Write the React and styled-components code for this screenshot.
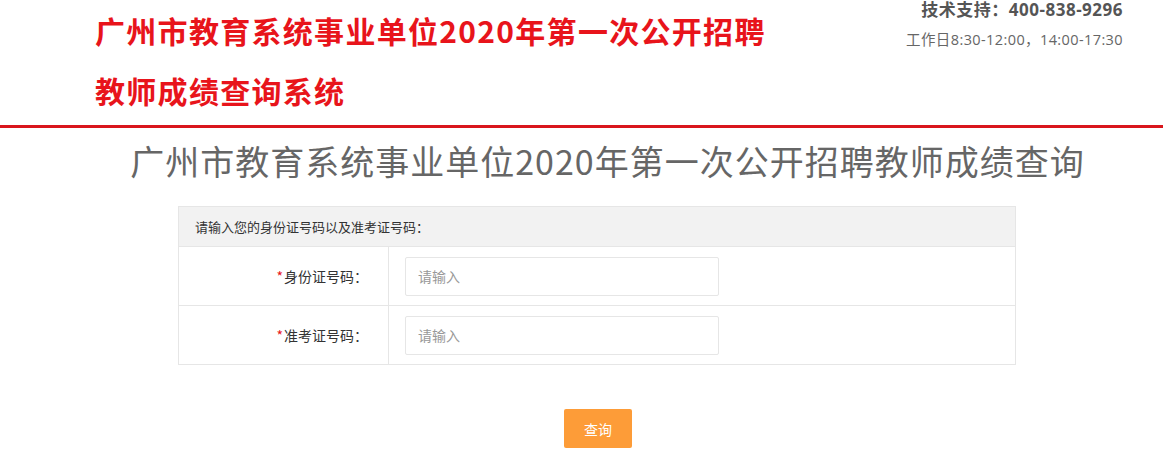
import React from 'react';
import styled, { createGlobalStyle } from 'styled-components';

const Global = createGlobalStyle`
    body {
        margin: 0;
        background: #fff;
        font-family: "Noto Sans CJK SC", "Noto Sans", sans-serif;
        color: #333;
    }
`;

const Header = styled.div`
    height: 125px;
    border-bottom: 3px solid #d9161c;
    display: flex;
    justify-content: space-between;
`;

const Brand = styled.div`
    padding-left: 95px;
`;

const BrandLine = styled.div`
    height: 60px;
    line-height: 60px;
    font-size: 30px;
    font-weight: 700;
    color: #e8141b;
    letter-spacing: 1.3px;
    white-space: nowrap;
`;

const Support = styled.div`
    padding-right: 40px;
    text-align: right;
`;

const Phone = styled.div`
    font-size: 17px;
    font-weight: 700;
    color: #555;
    line-height: 20px;
    letter-spacing: 0.5px;
    font-family: "Open Sans", "Noto Sans CJK SC", sans-serif;
`;

const Hours = styled.div`
    font-size: 14.5px;
    color: #666;
    line-height: 20px;
    margin-top: 10px;
    letter-spacing: 0.4px;
    font-family: "Open Sans", "Noto Sans CJK SC", sans-serif;
`;

const Title = styled.h1`
    margin: 3px 0 0 52px;
    text-align: center;
    font-size: 34px;
    font-weight: 400;
    line-height: 60px;
    color: #666;
    letter-spacing: 1px;
`;

const Card = styled.div`
    width: 836px;
    margin: 15px 0 0 178px;
    border: 1px solid #e6e6e6;
`;

const CardHead = styled.div`
    height: 39px;
    line-height: 39px;
    background: #f2f2f2;
    padding-left: 16px;
    font-size: 13px;
    color: #333;
`;

const Row = styled.div`
    display: flex;
    height: 58px;
    border-top: 1px solid #e6e6e6;
`;

const Label = styled.div`
    width: 189px;
    padding-right: 20px;
    border-right: 1px solid #e6e6e6;
    display: flex;
    align-items: center;
    justify-content: flex-end;
    font-size: 14px;
    color: #333;
`;

const Star = styled.span`
    color: #e8141b;
    margin-right: 1px;
`;

const Cell = styled.div`
    display: flex;
    align-items: center;
    padding-left: 16px;
`;

const Input = styled.input`
    box-sizing: border-box;
    width: 314px;
    height: 39px;
    border: 1px solid #e6e6e6;
    border-radius: 2px;
    padding: 0 12px;
    font-size: 14px;
    font-family: inherit;
    color: #333;
    outline: none;
    &::placeholder {
        color: #999;
    }
`;

const Actions = styled.div`
    padding: 44px 0 0 564px;
`;

const Button = styled.button`
    width: 68px;
    height: 39px;
    border: none;
    border-radius: 2px;
    background: #fd9c38;
    color: #fff;
    font-size: 14px;
    font-family: inherit;
    cursor: pointer;
`;

function App() {
    return (
        <React.Fragment>
            <Global />
            <Header>
                <Brand>
                    <BrandLine>广州市教育系统事业单位2020年第一次公开招聘</BrandLine>
                    <BrandLine>教师成绩查询系统</BrandLine>
                </Brand>
                <Support>
                    <Phone>技术支持：400-838-9296</Phone>
                    <Hours>工作日8:30-12:00，14:00-17:30</Hours>
                </Support>
            </Header>
            <Title>广州市教育系统事业单位2020年第一次公开招聘教师成绩查询</Title>
            <Card>
                <CardHead>请输入您的身份证号码以及准考证号码：</CardHead>
                <Row>
                    <Label><Star>*</Star>身份证号码：</Label>
                    <Cell><Input placeholder="请输入" /></Cell>
                </Row>
                <Row>
                    <Label><Star>*</Star>准考证号码：</Label>
                    <Cell><Input placeholder="请输入" /></Cell>
                </Row>
            </Card>
            <Actions>
                <Button>查询</Button>
            </Actions>
        </React.Fragment>
    );
}

export default App;
